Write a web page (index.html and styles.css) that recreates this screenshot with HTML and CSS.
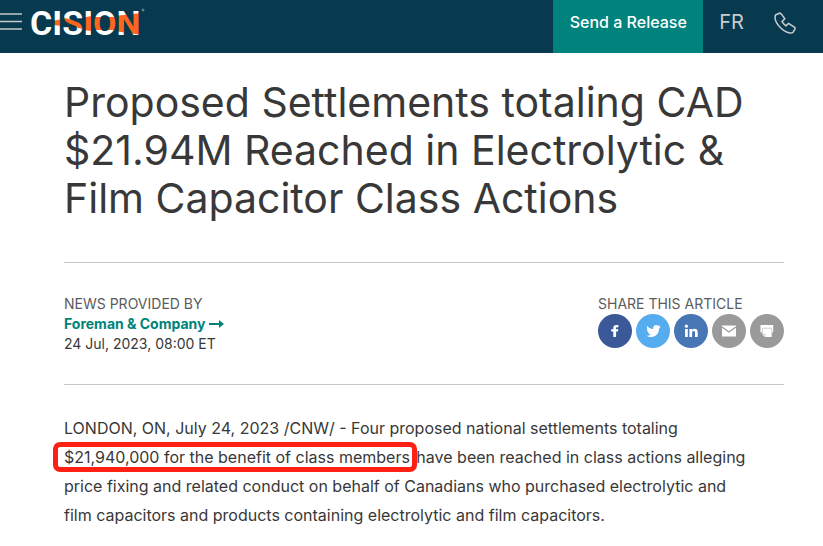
FILE: index.html
```html
<!DOCTYPE html>
<html lang="en">
<head>
<meta charset="utf-8">
<meta name="viewport" content="width=device-width, initial-scale=1">
<title>Proposed Settlements totaling CAD $21.94M</title>
<link rel="stylesheet" href="styles.css">
</head>
<body>
<header class="topbar">
  <button class="menu" type="button" aria-label="Menu">
    <svg width="22" height="18" viewBox="0 0 22 18"><path d="M0 2H22M0 9.5H22M0 17H22" stroke="#c9c9c6" stroke-width="1.6"/></svg>
  </button>
  <a class="logo" href="#" aria-label="Cision">
    <svg width="118" height="44" viewBox="0 0 118 44">
      <defs>
        <pattern id="ink" patternUnits="userSpaceOnUse" width="118" height="44">
          <rect width="118" height="44" fill="#fff"/>
          <path d="M22 21L32 19V26L22 25ZM32 17L52 23V29L32 23ZM52 18L61 16V31L52 30ZM61 17H84V30H61ZM84 16L112 13V35L84 31Z" fill="#ff651f"/>
        </pattern>
      </defs>
      <text class="wordmark" x="0" y="35" fill="url(#ink)">CISION</text>
      <circle cx="113" cy="10" r="1" fill="none" stroke="#9fb0b9" stroke-width=".7"/>
    </svg>
  </a>
  <nav class="actions">
    <a class="send" href="#">Send a Release</a>
    <a class="lang" href="#">FR</a>
    <a class="phone" href="#" aria-label="Call us">
      <svg width="22" height="22" viewBox="0 0 22 22" fill="none" stroke="#c9cccb" stroke-width="1.5" stroke-linejoin="round"><path d="M1.5 3L6 1L7.6 2.4L10.8 6.8L8 9.6C9 11.4 10.2 12.6 12 13.9L14.6 11.3L21 15.6L21 17L19 20.4C16 22.2 10.5 19.8 6.5 15.8C2.2 11.4.2 6.6 1.5 3Z"/></svg>
    </a>
  </nav>
</header>
<main class="article">
  <h1>Proposed Settlements totaling CAD $21.94M Reached in Electrolytic &amp; Film Capacitor Class Actions</h1>
  <section class="meta">
    <div class="source">
      <span class="label">NEWS PROVIDED BY</span>
      <a class="company" href="#">Foreman &amp; Company
        <svg width="15" height="8" viewBox="0 0 15 8"><path d="M0 3H10V0L15 4L10 8V5H0Z" fill="#00837a"/></svg></a>
      <time datetime="2023-07-24T08:00">24 Jul, 2023, 08:00 ET</time>
    </div>
    <div class="share">
      <span class="label">SHARE THIS ARTICLE</span>
      <div class="icons">
        <a class="icon facebook" href="#" aria-label="Facebook"><svg width="34" height="34" viewBox="0 0 34 34"><path d="M15.3 23V17.6H13.2V15.2H15.3V13.8C15.3 11.8 16.5 11 18.2 11H20.4V13.2H19C18.3 13.2 18.1 13.5 18.1 14.1V15.2H20.3L20 17.6H18.1V23Z" fill="#fff"/></svg></a>
        <a class="icon twitter" href="#" aria-label="Twitter"><svg width="34" height="34" viewBox="0 0 34 34"><path d="M24.7 12.8L23.1 14.5C23.1 19.5 19.4 23 15 23C13.3 23 11.8 22.6 10.6 21.7C12.2 21.8 13.6 21.4 14.8 20.5C13.4 20.4 12.4 19.6 12 18.5H13.2C11.8 18.1 10.8 16.9 10.8 15.5L12 15.8C10.9 14.8 10.5 13.3 11.3 12C12.8 13.8 14.9 14.9 17.2 15C16.7 12.8 18.1 11 20.2 11C21.1 11 21.9 11.4 22.4 12L24.3 11.3L23.3 12.9Z" fill="#fff"/></svg></a>
        <a class="icon linkedin" href="#" aria-label="LinkedIn"><svg width="34" height="34" viewBox="0 0 34 34"><circle cx="12.4" cy="12.2" r="1.6" fill="#fff"/><path d="M11.1 15H13.8V23H11.1ZM15.4 15H18V16.1C18.5 15.3 19.3 14.8 20.5 14.8C23 14.8 23.7 16.3 23.7 18.6V23H21V19C21 17.8 20.8 17 19.7 17C18.5 17 18.1 17.8 18.1 19V23H15.4Z" fill="#fff"/></svg></a>
        <a class="icon gray" href="#" aria-label="Email"><svg width="34" height="34" viewBox="0 0 34 34"><path d="M10 11.5H24V22.5H10Z" fill="#fff"/><path d="M10 13L17 18L24 13" fill="none" stroke="#9a9a9a" stroke-width="1.2"/></svg></a>
        <a class="icon gray" href="#" aria-label="Print"><svg width="34" height="34" viewBox="0 0 34 34"><path d="M10.5 11H23.2V18.5H21.7V23H15L12.5 20.8V18.5H10.5Z" fill="#fff"/><path d="M12.5 19V14.2H21.7V18.8M12.7 20.4H15.2V22.8" fill="none" stroke="#c4c4c4" stroke-width=".8"/></svg></a>
      </div>
    </div>
  </section>
  <p class="body">LONDON, ON, July 24, 2023 /CNW/ - Four proposed national settlements totaling<br>
    <mark>$21,940,000 for the benefit of class members</mark> have been reached in class actions alleging<br>
    price fixing and related conduct on behalf of Canadians who purchased electrolytic and<br>
    film capacitors and products containing electrolytic and film capacitors.</p>
</main>
</body>
</html>
```
FILE: styles.css
```css
* { box-sizing: border-box; }
body {
  margin: 0;
  background: #fff;
  color: #383838;
  font-family: Inter, "Open Sans", sans-serif;
  font-size: 16px;
}
a { text-decoration: none; color: inherit; }
svg { display: block; }

.topbar { display: flex; height: 53px; background: #073a4f; }
.menu { padding: 12px 0 0; border: 0; background: none; display: flex; align-items: flex-start; }
.logo { margin-left: 8px; }
.wordmark { font-family: Roboto, sans-serif; font-weight: 700; font-size: 34px; }
.actions { display: flex; margin-left: auto; line-height: 44px; }
.send { width: 150px; background: #00837d; color: #fff; font-weight: 500; text-align: center; }
.lang { padding: 0 16px; color: #c9cccb; font-size: 20px; }
.phone { padding: 12px 27px 0 14px; }

.article { padding: 25px 39px 20px 64px; }
h1 { margin: 0 0 40px; font-size: 41px; line-height: 48px; font-weight: 400; }
.meta {
  display: flex;
  justify-content: space-between;
  padding: 30px 0;
  border: 1px solid #c8c8c8;
  border-width: 1px 0;
  font-size: 14px;
  line-height: 20px;
}
.source { display: flex; flex-direction: column; }
.label { color: #5c5c5c; line-height: 21px; }
.company { display: flex; align-items: center; gap: 4px; color: #00837a; font-weight: 700; }
.share { display: flex; flex-direction: column; }
.icons { display: flex; gap: 4px; }
.icon { width: 34px; height: 34px; border-radius: 50%; }
.facebook { background: #3b5998; }
.twitter { background: #55acee; }
.linkedin { background: #4875b4; }
.gray { background: #9a9a9a; }

.body { margin: 29px 0 0; line-height: 29px; }
mark {
  margin: 0 0 0 -6px;
  padding: 0 2px 0 6px;
  background: none;
  color: inherit;
  border-radius: 2px;
  outline: 5px solid #ff2014;
}
```
